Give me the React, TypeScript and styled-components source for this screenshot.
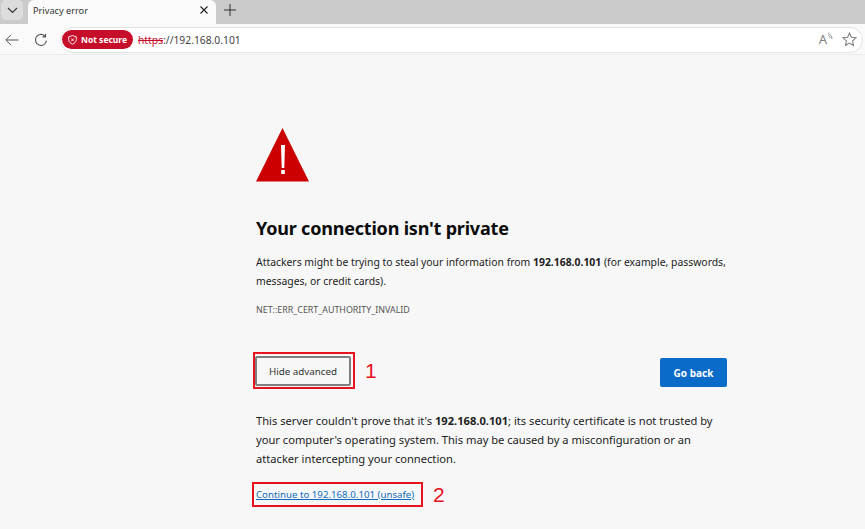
import React from 'react';
import styled, { createGlobalStyle } from 'styled-components';

const Global = createGlobalStyle`
  html, body { margin: 0; padding: 0; background: #f7f7f7; }
  body { width: 865px; height: 529px; overflow: hidden; font-family: "Noto Sans", "Open Sans", sans-serif; }
`;
const Page = styled.div`display:flex;flex-direction:column;width:865px;height:529px;overflow:hidden;background:#f7f7f7;`;
const TabStrip = styled.div`display:flex;align-items:flex-start;height:24px;background:#cbcbcb;flex:none;`;
const TabMenu = styled.div`width:22px;height:20px;margin:0 5px 0 1px;background:#dcdcdc;border-radius:5px;display:flex;align-items:center;justify-content:center;color:#333;`;
const Tab = styled.div`width:188px;height:24px;background:#fafafa;border-radius:6px 6px 0 0;display:flex;align-items:center;justify-content:space-between;padding:0 8px 4px 5px;box-sizing:border-box;font-size:9.2px;color:#333;`;
const NewTab = styled.div`margin-left:8px;height:20px;display:flex;align-items:center;color:#333;`;
const Toolbar = styled.div`display:flex;align-items:center;height:31px;padding:1px 2px 0 4px;background:#fafafa;border-bottom:1px solid #ececec;flex:none;box-sizing:border-box;`;
const NavBtn = styled.div<{ $gap: number }>`width:15px;height:16px;display:flex;align-items:center;justify-content:center;color:#555;margin-right:${p => p.$gap}px;`;
const Omnibox = styled.div`flex:1;height:26px;border:1px solid #e2e2e2;border-radius:13px;background:#fff;display:flex;align-items:center;box-sizing:border-box;padding:0 5px 0 1px;`;
const Badge = styled.div`height:19px;width:71px;background:#c60d29;border-radius:10px;color:#fff;display:flex;align-items:center;gap:4px;padding-left:6px;box-sizing:border-box;font-size:8.5px;font-weight:700;flex:none;`;
const Url = styled.div`margin-left:5px;font-size:10.3px;color:#444;flex:1;`;
const Scheme = styled.span`color:#c60d29;text-decoration:line-through;`;
const OmniIcons = styled.div`display:flex;align-items:center;gap:9px;color:#808080;`;
const ReadAloud = styled.div`display:flex;align-items:flex-start;color:#808080;font-size:13px;line-height:15px;`;
const Main = styled.main`flex:1;padding:73px 0 0 256px;box-sizing:border-box;`;
const Column = styled.div`width:471px;display:flex;flex-direction:column;`;
const Heading = styled.h1`margin:33px 0 0;font-size:18px;line-height:26px;font-weight:700;color:#0b0b0b;letter-spacing:-0.2px;`;
const Para = styled.p<{ $top: number; $size: number; $lh: number }>`margin:${p => p.$top}px 0 0;font-size:${p => p.$size}px;line-height:${p => p.$lh}px;color:#222;`;
const Code = styled.div`margin-top:13px;font-size:8.9px;line-height:12px;color:#555;`;
const ButtonRow = styled.div`display:flex;align-items:flex-start;justify-content:space-between;margin-top:36px;`;
const Left = styled.div`display:flex;align-items:center;margin-left:-3px;`;
const RedBox = styled.div`border:2px solid #e8121f;box-sizing:border-box;display:flex;width:102px;height:37px;`;
const HideBtn = styled.button`width:96px;height:30px;margin:2px 0 0 0;box-sizing:border-box;border:2px solid #7f7f7f;border-radius:2px;background:#f7f7f7;font:400 9.8px "Noto Sans",sans-serif;color:#333;padding:1px 0 0;`;
const Num = styled.span`font:400 21px "Liberation Sans",sans-serif;color:#e8121f;margin-left:10px;`;
const BackBtn = styled.button`width:67px;height:29px;margin-top:6px;background:#0a6cc8;border:0;border-radius:2px;color:#fff;font:700 10px "Noto Sans",sans-serif;padding:0;`;
const LinkRow = styled.div`display:flex;align-items:center;margin:14px 0 0 -4px;`;
const LinkBox = styled.div`border:2px solid #e8121f;box-sizing:border-box;width:171px;height:25px;display:flex;align-items:center;padding-left:2px;`;
const Link = styled.a`color:#0f6cbd;font-size:9.7px;text-decoration:underline;white-space:nowrap;`;

export default function App() {
  return (
    <Page>
      <Global />
      <TabStrip>
        <TabMenu>
          <svg width="11" height="7" viewBox="0 0 11 7" fill="none" stroke="currentColor" strokeWidth="1.1"><path d="M1 1l4.5 4.5L10 1" /></svg>
        </TabMenu>
        <Tab>
          <span>Privacy error</span>
          <svg width="8" height="8" viewBox="0 0 8 8" stroke="#222" strokeWidth="1.1"><path d="M.5.5l7 7M7.5.5l-7 7" /></svg>
        </Tab>
        <NewTab>
          <svg width="12" height="12" viewBox="0 0 12 12" stroke="currentColor" strokeWidth="1"><path d="M6 0v12M0 6h12" /></svg>
        </NewTab>
      </TabStrip>
      <Toolbar>
        <NavBtn $gap={14}>
          <svg width="14" height="12" viewBox="0 0 14 12" fill="none" stroke="currentColor" strokeWidth="1"><path d="M13.500 6H1M6 .8L.8 6 6 11.200" /></svg>
        </NavBtn>
        <NavBtn $gap={12}>
          <svg width="14" height="14" viewBox="0 0 14 14" fill="none" stroke="currentColor" strokeWidth="1.1"><path d="M12.400 7.600A5.500 5.500 0 1 1 10.800 3M11.500.9v3h-3" /></svg>
        </NavBtn>
        <Omnibox>
          <Badge>
            <svg width="9" height="10" viewBox="0 0 9 10" fill="none" stroke="#fff" strokeWidth=".9"><path d="M4.500.6l3.800 1.200v3c0 2-1.600 3.400-3.800 4.400C2.300 8.200.7 6.800.7 4.800v-3z" /><path d="M3.200 3.500l2.600 2.800M5.800 3.500L3.200 6.300" /></svg>
            <span>Not secure</span>
          </Badge>
          <Url><Scheme>https</Scheme>://192.168.0.101</Url>
          <OmniIcons>
            <ReadAloud>
              A
              <svg width="6" height="8" viewBox="0 0 6 8" fill="none" stroke="currentColor" strokeWidth=".8"><path d="M1 1c2 1 4 3 4 6M1 3c1 .6 2 1.600 2 3" /></svg>
            </ReadAloud>
            <svg width="15" height="15" viewBox="0 0 14 14" fill="none" stroke="currentColor" strokeWidth="1"><path d="M7 1l1.800 3.900 4.200.5-3.100 2.900.8 4.200L7 10.400 3.300 12.500l.8-4.200L1 5.400l4.200-.5z" /></svg>
          </OmniIcons>
        </Omnibox>
      </Toolbar>
      <Main>
        <Column>
          <svg width="53" height="54" viewBox="0 0 53 54">
            <path d="M26.500 0L53 53.500H0z" fill="#cc0000" />
            <path d="M25 17h4l-.7 23h-2.600zM25.200 42h3.600v4h-3.600z" fill="#fff" />
          </svg>
          <Heading>Your connection isn't private</Heading>
          <Para $top={12} $size={10.4} $lh={19}>
            Attackers might be trying to steal your information from <b>192.168.0.101</b> (for example, passwords, messages, or credit cards).
          </Para>
          <Code>NET::ERR_CERT_AUTHORITY_INVALID</Code>
          <ButtonRow>
            <Left>
              <RedBox><HideBtn>Hide advanced</HideBtn></RedBox>
              <Num>1</Num>
            </Left>
            <BackBtn>Go back</BackBtn>
          </ButtonRow>
          <Para $top={22} $size={11.15} $lh={19}>
            This server couldn't prove that it's <b>192.168.0.101</b>; its security certificate is not trusted by your computer's operating system. This may be caused by a misconfiguration or an attacker intercepting your connection.
          </Para>
          <LinkRow>
            <LinkBox><Link href="#">Continue to 192.168.0.101 (unsafe)</Link></LinkBox>
            <Num>2</Num>
          </LinkRow>
        </Column>
      </Main>
    </Page>
  );
}
